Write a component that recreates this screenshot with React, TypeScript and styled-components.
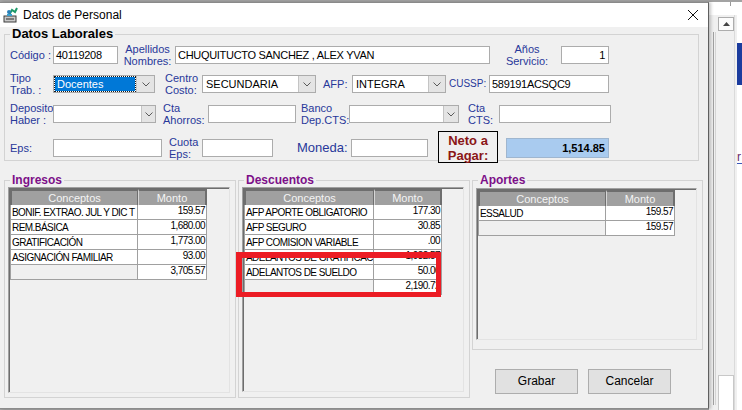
import React from 'react';
import styled, { createGlobalStyle } from 'styled-components';

const GlobalStyle = createGlobalStyle`
  html, body {
    margin: 0;
    padding: 0;
  }
  body {
    width: 742px;
    height: 410px;
    overflow: hidden;
    background: #a3a3a3;
    font-family: "Liberation Sans", Arial, sans-serif;
  }
`;

const Screen = styled.div`
  display: flex;
  width: 742px;
  height: 410px;
  background: #a3a3a3;
`;

const Dialog = styled.div`
  position: relative;
  z-index: 1;
  flex: none;
  width: 709px;
  height: 407px;
  margin-top: 2px;
  box-sizing: border-box;
  display: flex;
  flex-direction: column;
  background: #f0f0f0;
  border-top: 1px solid #8a8a8a;
  border-right: 1px solid #5f5f5f;
  border-bottom: 1px solid #8c8c8c;
  box-shadow: 2px 0 3px rgba(0, 0, 0, 0.22);
`;

const TitleBar = styled.div`
  height: 24px;
  flex: none;
  display: flex;
  align-items: center;
  background: #fff;
  padding: 0 10px 0 3px;
`;

const TitleText = styled.span`
  margin-left: 4px;
  font-size: 12px;
  color: #000;
`;

const CloseButton = styled.div`
  margin-left: auto;
  width: 10px;
  height: 10px;
  display: flex;
`;

const Body = styled.div`
  flex: 1;
  display: flex;
  flex-direction: column;
  padding-left: 4px;
`;

const GroupBox = styled.fieldset<{ $w: number; $h: number }>`
  position: relative;
  margin: 0;
  padding: 0;
  min-width: 0;
  width: ${p => p.$w}px;
  height: ${p => p.$h}px;
  box-sizing: border-box;
  border: 1px solid #d3d3d3;
  flex: none;
`;

const Legend = styled.legend<{ $size: number; $color: string }>`
  margin-left: 5px;
  padding: 0 2px;
  font-size: ${p => p.$size}px;
  font-weight: bold;
  line-height: 14px;
  color: ${p => p.$color};
`;

const Row = styled.div<{ $mt: number }>`
  display: flex;
  align-items: center;
  height: 18px;
  margin-top: ${p => p.$mt}px;
`;

const Label = styled.div<{ $w: number; $ml: number; $align?: string; $size?: number }>`
  flex: none;
  width: ${p => p.$w}px;
  margin-left: ${p => p.$ml}px;
  font-size: ${p => p.$size || 11}px;
  line-height: 12px;
  color: #28389a;
  white-space: pre-line;
  text-align: ${p => p.$align || 'left'};
`;

const TextBox = styled.div<{ $w: number; $ml: number; $right?: boolean; $h?: number }>`
  flex: none;
  width: ${p => p.$w}px;
  height: ${p => p.$h || 18}px;
  margin-left: ${p => p.$ml}px;
  box-sizing: border-box;
  border: 1px solid #acacac;
  background: #fff;
  padding: 0 3px 0 2px;
  font-size: 11px;
  letter-spacing: -0.3px;
  line-height: ${p => (p.$h || 18) - 2}px;
  color: #000;
  text-align: ${p => (p.$right ? 'right' : 'left')};
  white-space: nowrap;
  overflow: hidden;
`;

const TotalBox = styled(TextBox)`
  background: #a9cbef;
  border-color: #9fb6cf;
  font-weight: bold;
  letter-spacing: 0;
`;

const ComboBox = styled.div<{ $w: number; $ml: number }>`
  flex: none;
  display: flex;
  width: ${p => p.$w}px;
  height: 18px;
  margin-left: ${p => p.$ml}px;
  box-sizing: border-box;
  border: 1px solid #acacac;
  background: #fff;
`;

const ComboValue = styled.div<{ $selected?: boolean }>`
  flex: 1;
  margin: 1px;
  padding-left: 2px;
  font-size: 11px;
  line-height: 14px;
  color: ${p => (p.$selected ? '#fff' : '#000')};
  background: ${p => (p.$selected ? '#0078d7' : 'transparent')};
  outline: ${p => (p.$selected ? '1px dotted #1a1a1a' : 'none')};
  white-space: nowrap;
  overflow: hidden;
`;

const ComboButton = styled.div<{ $w: number }>`
  flex: none;
  width: ${p => p.$w}px;
  display: flex;
  align-items: center;
  justify-content: center;
  background: #e4e4e4;
  border-left: 1px solid #c4c4c4;
`;

const NetoBox = styled.div<{ $w: number; $ml: number }>`
  flex: none;
  width: ${p => p.$w}px;
  height: 32px;
  margin-left: ${p => p.$ml}px;
  margin-top: -3px;
  box-sizing: border-box;
  border: 1px solid #000;
  font-size: 13px;
  font-weight: bold;
  line-height: 15px;
  padding-top: 1px;
  color: #8b1616;
  text-align: center;
  white-space: pre-line;
  background: #f0f0f0;
`;

const LowerRow = styled.div`
  display: flex;
  margin-top: 12px;
  gap: 2px;
`;

const SideColumn = styled.div`
  display: flex;
  flex-direction: column;
`;

const Panel = styled.div<{ $h: number; $mt?: number }>`
  height: ${p => p.$h}px;
  margin: ${p => p.$mt || 0}px 5px 0 3px;
  box-sizing: border-box;
  border-top: 1px solid #a0a0a0;
  border-left: 1px solid #a0a0a0;
  border-right: 1px solid #e3e3e3;
  border-bottom: 1px solid #e3e3e3;
  box-shadow: inset 1px 1px 0 #6d6d6d;
  padding: 1px 0 0 1px;
`;

const Grid = styled.div<{ $c1: number; $c2: number }>`
  display: grid;
  grid-template-columns: ${p => p.$c1}px ${p => p.$c2}px;
`;

const HeadCell = styled.div<{ $first?: boolean }>`
  height: 16px;
  box-sizing: border-box;
  background: #a0a0a0;
  color: #f4f4f4;
  font-size: 11px;
  line-height: 14px;
  text-align: center;
  border-top: 2px solid #6e6e6e;
  border-left: ${p => (p.$first ? '2px solid #6e6e6e' : '1px solid #d6d6d6')};
  border-right: ${p => (p.$first ? '1px solid #6e6e6e' : '2px solid #6e6e6e')};
`;

const Cell = styled.div<{ $num?: boolean; $blank?: boolean; $first?: boolean }>`
  height: 15px;
  box-sizing: border-box;
  background: ${p => (p.$blank ? '#f0f0f0' : '#fff')};
  border-bottom: 1px solid #a0a0a0;
  border-right: 1px solid #a0a0a0;
  border-left: ${p => (p.$first ? '1px solid #a0a0a0' : 'none')};
  font-size: 10px;
  letter-spacing: -0.55px;
  line-height: ${p => (p.$num ? '11px' : '16px')};
  padding: 0 1px 0 1px;
  text-align: ${p => (p.$num ? 'right' : 'left')};
  white-space: nowrap;
  overflow: hidden;
  color: #000;
`;

const RedMark = styled.div`
  position: absolute;
  left: -3px;
  top: 65px;
  width: 205px;
  height: 45px;
  box-sizing: border-box;
  border: 6px solid #ec1c24;
  border-right-width: 5px;
  border-bottom-width: 5px;
`;

const ButtonRow = styled.div`
  display: flex;
  gap: 10px;
  margin-top: 19px;
  padding-left: 23px;
`;

const Button = styled.div`
  width: 83px;
  height: 25px;
  box-sizing: border-box;
  border: 1px solid #adadad;
  background: #e1e1e1;
  font-size: 12px;
  line-height: 23px;
  text-align: center;
  color: #000;
`;

/* background application at the right edge */
const Backdrop = styled.div`
  flex: none;
  width: 33px;
  display: flex;
  flex-direction: column;
  height: 410px;
  background: #f0f0f0;
`;

const BackdropTop = styled.div`
  height: 15px;
  flex: none;
  background: #fff;
  border-top: 2px solid #a3a3a3;
  box-sizing: border-box;
  display: flex;
`;

const TopDivider = styled.div`
  width: 1px;
  height: 4px;
  margin-left: 21px;
  background: #9a9a9a;
`;

const BackdropMain = styled.div`
  flex: 1;
  display: flex;
`;

const Rail = styled.div`
  width: 9px;
  flex: none;
  display: flex;
  gap: 1px;
  padding: 17px 0 5px 4px;
  box-sizing: border-box;
`;

const RailLine = styled.div<{ $c: string }>`
  width: 1px;
  background: ${p => p.$c};
`;

const ScrollColumn = styled.div`
  width: 16px;
  flex: none;
  display: flex;
  flex-direction: column;
  background: #f0f0f0;
  border-right: 1px solid #dadada;
`;

const ScrollArrow = styled.div`
  height: 14px;
  margin-top: 2px;
  box-sizing: border-box;
  border: 1px solid #adadad;
  background: #fcfcfc;
  display: flex;
  align-items: center;
  justify-content: center;
`;

const ScrollThumb = styled.div`
  margin-top: auto;
  height: 35px;
  box-sizing: border-box;
  border: 1px solid #c8c8c8;
  border-bottom: none;
  background: #fff;
`;

const Pane = styled.div`
  flex: none;
  width: 5px;
  margin-left: 2px;
  background: linear-gradient(to bottom, #fff 0, #fff 28px, #1b3c9e 28px, #1b3c9e 70px, #fff 70px);
  display: flex;
  flex-direction: column;
`;

const PaneLetter = styled.div`
  margin-top: 136px;
  font-size: 12px;
  line-height: 12px;
  color: #6a2a6a;
  border-bottom: 1px solid #3b57b9;
`;

const Chevron = () => (
  <svg width="8" height="5" viewBox="0 0 8 5">
    <polyline points="0.5,0.5 4,4 7.5,0.5" fill="none" stroke="#5a5a5a" strokeWidth="1" />
  </svg>
);

const AppIcon = () => (
  <svg width="16" height="16" viewBox="0 0 16 16">
    <rect x="1" y="9" width="12" height="6" fill="#c9c9c9" stroke="#3c3c3c" strokeWidth="1" />
    <rect x="3" y="11" width="8" height="2" fill="#7a7a7a" />
    <path d="M6 8 L9 3 L12 5 L14 1" fill="none" stroke="#1d9a6a" strokeWidth="2" />
    <circle cx="6" cy="5" r="2" fill="#2a7fb8" />
    <rect x="4" y="7" width="5" height="2" fill="#3aa0d0" />
  </svg>
);

const CloseIcon = () => (
  <svg width="10" height="10" viewBox="0 0 10 10">
    <path d="M0 0 L10 10 M10 0 L0 10" stroke="#111" strokeWidth="1" />
  </svg>
);

type Line = { c: string; m: string };

const DataTable = ({ c1, c2, rows, total }: { c1: number; c2: number; rows: Line[]; total: string }) => (
  <Grid $c1={c1} $c2={c2}>
    <HeadCell $first>Conceptos</HeadCell>
    <HeadCell>Monto</HeadCell>
    {rows.map((r, i) => (
      <React.Fragment key={i}>
        <Cell $first>{r.c}</Cell>
        <Cell $num>{r.m}</Cell>
      </React.Fragment>
    ))}
    <Cell $first $blank />
    <Cell $num>{total}</Cell>
  </Grid>
);

const ingresos: Line[] = [
  { c: 'BONIF. EXTRAO. JUL Y DIC T', m: '159.57' },
  { c: 'REM.BÁSICA', m: '1,680.00' },
  { c: 'GRATIFICACIÓN', m: '1,773.00' },
  { c: 'ASIGNACIÓN FAMILIAR', m: '93.00' },
];

const descuentos: Line[] = [
  { c: 'AFP APORTE OBLIGATORIO', m: '177.30' },
  { c: 'AFP SEGURO', m: '30.85' },
  { c: 'AFP COMISION VARIABLE', m: '.00' },
  { c: 'ADELANTOS DE GRATIFICACI', m: '1,932.57' },
  { c: 'ADELANTOS DE SUELDO', m: '50.00' },
];

const aportes: Line[] = [{ c: 'ESSALUD', m: '159.57' }];

export default function App() {
  return (
    <>
      <GlobalStyle />
      <Screen>
        <Dialog>
          <TitleBar>
            <AppIcon />
            <TitleText>Datos de Personal</TitleText>
            <CloseButton>
              <CloseIcon />
            </CloseButton>
          </TitleBar>

          <Body>
            <GroupBox $w={695} $h={134}>
              <Legend $size={13} $color="#000">Datos Laborales</Legend>

              <Row $mt={5}>
                <Label $w={43} $ml={5}>Código :</Label>
                <TextBox $w={65} $ml={0}>40119208</TextBox>
                <Label $w={51} $ml={4} $align="center">{'Apellidos\nNombres:'}</Label>
                <TextBox $w={315} $ml={2}>CHUQUITUCTO SANCHEZ , ALEX YVAN</TextBox>
                <Label $w={60} $ml={7} $align="center">{'Años\nServicio:'}</Label>
                <TextBox $w={48} $ml={4} $right>1</TextBox>
              </Row>

              <Row $mt={11}>
                <Label $w={43} $ml={5}>{'Tipo\nTrab. :'}</Label>
                <ComboBox $w={102} $ml={0}>
                  <ComboValue $selected>Docentes</ComboValue>
                  <ComboButton $w={17}><Chevron /></ComboButton>
                </ComboBox>
                <Label $w={35} $ml={10}>{'Centro\nCosto:'}</Label>
                <ComboBox $w={114} $ml={2}>
                  <ComboValue>SECUNDARIA</ComboValue>
                  <ComboButton $w={16}><Chevron /></ComboButton>
                </ComboBox>
                <Label $w={26} $ml={7}>AFP:</Label>
                <ComboBox $w={94} $ml={3}>
                  <ComboValue>INTEGRA</ComboValue>
                  <ComboButton $w={16}><Chevron /></ComboButton>
                </ComboBox>
                <Label $w={37} $ml={3} $size={10}>CUSSP:</Label>
                <TextBox $w={120} $ml={3}>589191ACSQC9</TextBox>
              </Row>

              <Row $mt={12}>
                <Label $w={43} $ml={5}>{'Deposito\nHaber :'}</Label>
                <ComboBox $w={103} $ml={0}>
                  <ComboValue />
                  <ComboButton $w={13}><Chevron /></ComboButton>
                </ComboBox>
                <Label $w={42} $ml={7}>{'Cta\nAhorros:'}</Label>
                <TextBox $w={88} $ml={3} />
                <Label $w={45} $ml={5}>{'Banco\nDep.CTS:'}</Label>
                <ComboBox $w={110} $ml={3}>
                  <ComboValue />
                  <ComboButton $w={14}><Chevron /></ComboButton>
                </ComboBox>
                <Label $w={22} $ml={9}>{'Cta\nCTS:'}</Label>
                <TextBox $w={112} $ml={9} />
              </Row>

              <Row $mt={16}>
                <Label $w={43} $ml={5}>Eps:</Label>
                <TextBox $w={109} $ml={0} />
                <Label $w={30} $ml={7}>{'Cuota\nEps:'}</Label>
                <TextBox $w={71} $ml={3} />
                <Label $w={50} $ml={24} $size={13}>Moneda:</Label>
                <TextBox $w={77} $ml={4} />
                <NetoBox $w={60} $ml={10}>{'Neto a\nPagar:'}</NetoBox>
                <TotalBox $w={103} $ml={8} $h={20} $right>1,514.85</TotalBox>
              </Row>
            </GroupBox>

            <LowerRow>
              <GroupBox $w={232} $h={225}>
                <Legend $size={12} $color="#7c0f88">Ingresos</Legend>
                <Panel $h={206}>
                  <DataTable c1={128} c2={69} rows={ingresos} total="3,705.57" />
                </Panel>
              </GroupBox>

              <GroupBox $w={232} $h={225}>
                <Legend $size={12} $color="#7c0f88">Descuentos</Legend>
                <Panel $h={205}>
                  <DataTable c1={130} c2={68} rows={descuentos} total="2,190.72" />
                </Panel>
                <RedMark />
              </GroupBox>

              <SideColumn>
                <GroupBox $w={231} $h={177}>
                  <Legend $size={12} $color="#7c0f88">Aportes</Legend>
                  <Panel $h={152} $mt={1}>
                    <DataTable c1={128} c2={69} rows={aportes} total="159.57" />
                  </Panel>
                </GroupBox>
                <ButtonRow>
                  <Button>Grabar</Button>
                  <Button>Cancelar</Button>
                </ButtonRow>
              </SideColumn>
            </LowerRow>
          </Body>
        </Dialog>

        <Backdrop>
          <BackdropTop>
            <TopDivider />
          </BackdropTop>
          <BackdropMain>
            <Rail>
              <RailLine $c="#a0a0a0" />
              <RailLine $c="#d4d4d4" />
            </Rail>
            <ScrollColumn>
              <ScrollArrow>
                <svg width="7" height="4" viewBox="0 0 7 4">
                  <polygon points="0,4 3.5,0 7,4" fill="#444" />
                </svg>
              </ScrollArrow>
              <ScrollThumb />
            </ScrollColumn>
            <Pane>
              <PaneLetter>r</PaneLetter>
            </Pane>
          </BackdropMain>
        </Backdrop>
      </Screen>
    </>
  );
}
